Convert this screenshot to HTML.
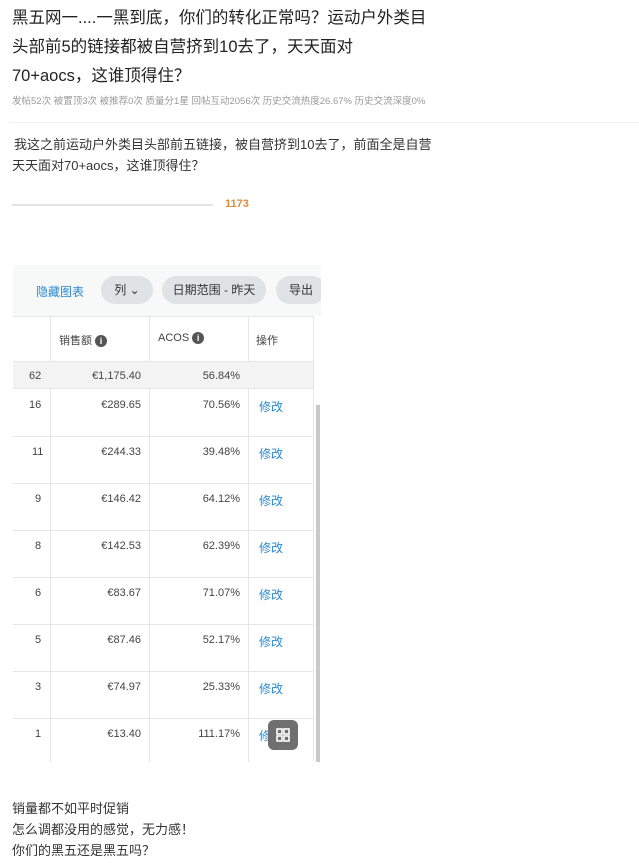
<!DOCTYPE html>
<html><head><meta charset="utf-8"><style>
body{margin:0;width:639px;height:863px;background:#fff;font-family:"Liberation Sans","Noto Sans CJK SC",sans-serif;position:relative;overflow:hidden}
.a{position:absolute;white-space:nowrap}
.t{font-size:16.5px;color:#222;left:12px;line-height:22px}
.m{font-size:9.5px;color:#999;left:12px;top:93px}
.p{font-size:13px;color:#333;left:12px;line-height:21px}
.img{position:absolute;left:13px;top:265px;width:308px;height:497px;background:#fff;overflow:hidden}
.tb{position:absolute;left:0;top:0;width:308px;height:51px;background:#f7f8f8}
.pill{position:absolute;top:11px;height:28px;border-radius:14px;background:#dfe3e6;font-size:12px;color:#333;line-height:28px;text-align:center}
.vl{position:absolute;top:51px;bottom:0;width:1px;background:#e6e6e6}
.hl{position:absolute;left:0;width:300px;height:1px;background:#e6e6e6}
.c{position:absolute;font-size:11px;color:#444}
.r{text-align:right}
.lk{color:#2a8ad0;font-size:12px}
.i{display:inline-block;width:12px;height:12px;border-radius:50%;background:#555;color:#fff;font-size:9px;line-height:12px;text-align:center;font-weight:bold;vertical-align:middle;margin-left:3px}
</style></head><body>
<div class="a t" style="top:7px">黑五网一....一黑到底，你们的转化正常吗？运动户外类目</div>
<div class="a t" style="top:36px">头部前5的链接都被自营挤到10去了，天天面对</div>
<div class="a t" style="top:65px">70+aocs，这谁顶得住？</div>
<div class="a m">发帖52次 被置顶3次 被推荐0次 质量分1星 回帖互动2056次 历史交流热度26.67% 历史交流深度0%</div>
<div class="a" style="left:10px;top:122px;width:629px;height:1px;background:#f0f0f0"></div>
<div class="a p" style="top:134px;left:14px">我这之前运动户外类目头部前五链接，被自营挤到10去了，前面全是自营</div>
<div class="a p" style="top:155px">天天面对70+aocs，这谁顶得住？</div>
<div class="a" style="left:12px;top:204px;width:201px;height:2px;background:#e3e3e3"></div>
<div class="a" style="left:225px;top:198px;font-size:11px;font-weight:bold;color:#e08a3c">1173</div>
<div class="img">
<div class="tb"></div>
<div class="c lk" style="left:23px;top:18px">隐藏图表</div>
<div class="pill" style="left:88px;width:52px">列 ⌄</div>
<div class="pill" style="left:149px;width:104px">日期范围 - 昨天</div>
<div class="pill" style="left:263px;width:50px">导出</div>
<div class="vl" style="left:37px"></div><div class="vl" style="left:136px"></div><div class="vl" style="left:235px"></div><div class="vl" style="left:300px"></div>
<div class="hl" style="top:51px"></div>
<div class="c" style="left:46px;top:67px">销售额<span class="i">i</span></div>
<div class="c" style="left:145px;top:67px">ACOS<span class="i">i</span></div>
<div class="c" style="left:243px;top:67px">操作</div>
<div class="hl" style="top:96px"></div>
<div style="position:absolute;left:0;top:97px;width:300px;height:26px;background:#f3f3f3"></div>
<div class="hl" style="top:123px"></div>
<div style="position:absolute;left:303px;top:140px;width:4px;height:357px;background:#c8c8c8"></div>
<div class="c" style="left:16px;top:105px">62</div><div class="c r" style="left:40px;width:88px;top:105px">€1,175.40</div><div class="c r" style="left:140px;width:87px;top:105px">56.84%</div>
<div class="c" style="left:16px;top:134px">16</div><div class="c r" style="left:40px;width:88px;top:134px">€289.65</div><div class="c r" style="left:140px;width:87px;top:134px">70.56%</div><div class="c lk" style="left:246px;top:133px">修改</div>
<div class="hl" style="top:171px"></div>
<div class="c" style="left:19px;top:181px">11</div><div class="c r" style="left:40px;width:88px;top:181px">€244.33</div><div class="c r" style="left:140px;width:87px;top:181px">39.48%</div><div class="c lk" style="left:246px;top:180px">修改</div>
<div class="hl" style="top:218px"></div>
<div class="c" style="left:22px;top:228px">9</div><div class="c r" style="left:40px;width:88px;top:228px">€146.42</div><div class="c r" style="left:140px;width:87px;top:228px">64.12%</div><div class="c lk" style="left:246px;top:227px">修改</div>
<div class="hl" style="top:265px"></div>
<div class="c" style="left:22px;top:275px">8</div><div class="c r" style="left:40px;width:88px;top:275px">€142.53</div><div class="c r" style="left:140px;width:87px;top:275px">62.39%</div><div class="c lk" style="left:246px;top:274px">修改</div>
<div class="hl" style="top:312px"></div>
<div class="c" style="left:22px;top:322px">6</div><div class="c r" style="left:40px;width:88px;top:322px">€83.67</div><div class="c r" style="left:140px;width:87px;top:322px">71.07%</div><div class="c lk" style="left:246px;top:321px">修改</div>
<div class="hl" style="top:359px"></div>
<div class="c" style="left:22px;top:369px">5</div><div class="c r" style="left:40px;width:88px;top:369px">€87.46</div><div class="c r" style="left:140px;width:87px;top:369px">52.17%</div><div class="c lk" style="left:246px;top:368px">修改</div>
<div class="hl" style="top:406px"></div>
<div class="c" style="left:22px;top:416px">3</div><div class="c r" style="left:40px;width:88px;top:416px">€74.97</div><div class="c r" style="left:140px;width:87px;top:416px">25.33%</div><div class="c lk" style="left:246px;top:415px">修改</div>
<div class="hl" style="top:453px"></div>
<div class="c" style="left:22px;top:463px">1</div><div class="c r" style="left:40px;width:88px;top:463px">€13.40</div><div class="c r" style="left:140px;width:87px;top:463px">111.17%</div><div class="c lk" style="left:246px;top:462px">修改</div>
<div style="position:absolute;left:255px;top:455px;width:30px;height:30px;border-radius:6px;background:#6f6f6f">
<svg width="30" height="30" viewBox="0 0 30 30" fill="none" stroke="#fff" stroke-width="1.6"><rect x="9" y="9" width="5" height="5"/><rect x="16" y="9" width="5" height="5"/><rect x="9" y="16" width="5" height="5"/><rect x="16" y="16" width="5" height="5"/></svg></div>
</div>
<div class="a p" style="top:798px">销量都不如平时促销</div>
<div class="a p" style="top:819px">怎么调都没用的感觉，无力感！</div>
<div class="a p" style="top:840px">你们的黑五还是黑五吗？</div>
</body></html>
